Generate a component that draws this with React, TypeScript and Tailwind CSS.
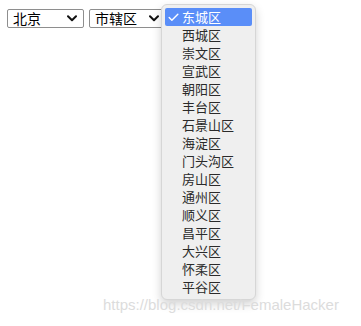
import { Check } from "lucide-react";

const districts = [
  "东城区",
  "西城区",
  "崇文区",
  "宣武区",
  "朝阳区",
  "丰台区",
  "石景山区",
  "海淀区",
  "门头沟区",
  "房山区",
  "通州区",
  "顺义区",
  "昌平区",
  "大兴区",
  "怀柔区",
  "平谷区",
];

function Chevron() {
  return (
    <svg width="10" height="7" viewBox="0 0 10 7" className="shrink-0">
      <path d="M1 1.2 L5 5.2 L9 1.2" fill="none" stroke="#111" strokeWidth="2" strokeLinecap="round" strokeLinejoin="round" />
    </svg>
  );
}

function FakeSelect({ label, width }: { label: string; width: string }) {
  return (
    <div
      className={`${width} h-[19px] flex items-center justify-between pl-[5px] pr-[6px] bg-white border border-[#8e8e8e] rounded-[2px] text-[14px] leading-[17px] text-black`}
    >
      <span>{label}</span>
      <Chevron />
    </div>
  );
}

export default function App() {
  return (
    <div
      className="relative w-[361px] h-[326px] bg-white overflow-hidden"
      style={{ fontFamily: '"Noto Sans CJK SC", "Noto Sans", sans-serif' }}
    >
      <div className="flex gap-[5px] pt-[9px] pl-[7px]">
        <FakeSelect label="北京" width="w-[77px]" />
        <FakeSelect label="市辖区" width="w-[77px]" />
      </div>

      <div className="absolute left-[161px] top-[4px] w-[95px] pt-[3px] pb-[3px] bg-[#efefef] rounded-[6px] border border-[#d6d6d6] shadow-[0_4px_10px_rgba(0,0,0,0.18)]">
        {districts.map((d, i) => (
          <div
            key={d}
            className={`mx-[3px] h-[18px] flex items-center text-[13px] leading-[16px] ${
              i === 0 ? "bg-[#5a8ef8] text-white rounded-[2px]" : "text-[#2a2a2a]"
            }`}
          >
            <span className="w-[17px] flex justify-center">
              {i === 0 && <Check size={13} strokeWidth={2.6} />}
            </span>
            <span>{d}</span>
          </div>
        ))}
      </div>

      <div
        className="absolute left-[103px] top-[296px] text-[15px] leading-[18px] text-[#dcdcdc]"
        style={{ fontFamily: '"Liberation Sans", Arial, sans-serif' }}
      >
        https://blog.csdn.net/FemaleHacker
      </div>
    </div>
  );
}
